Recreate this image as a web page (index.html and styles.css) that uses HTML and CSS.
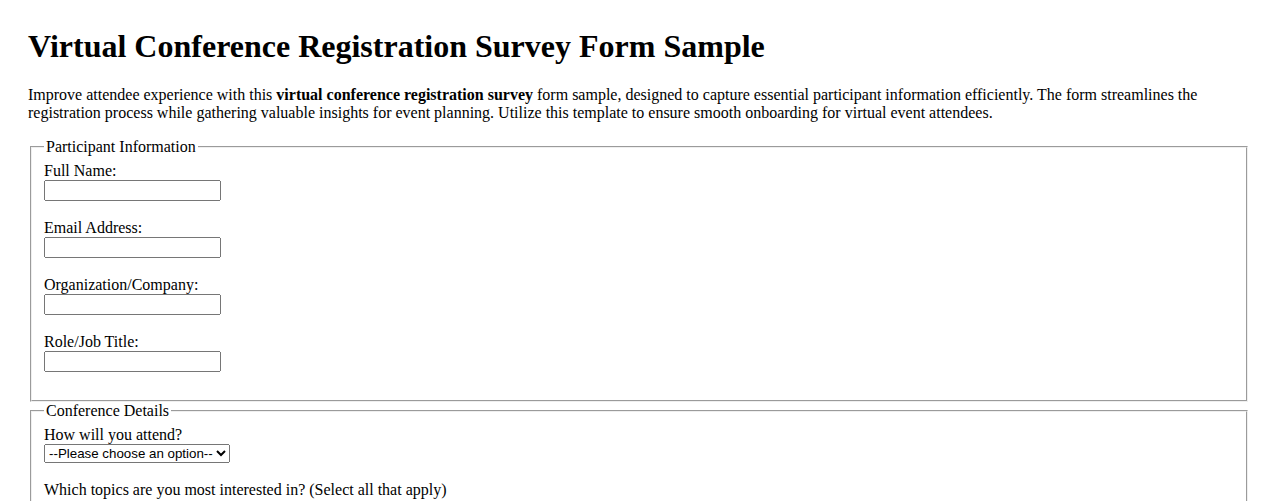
FILE: index.html
```html
<!DOCTYPE html>
<html lang="en">
<head>
<meta charset="utf-8">
<title>Virtual Conference Registration Survey Form Sample</title>
<link rel="stylesheet" href="styles.css">
</head>
<body>
<h1 class="title">Virtual Conference Registration Survey Form Sample</h1>
<p class="intro">Improve attendee experience with this <strong>virtual conference registration survey</strong> form sample, designed to capture essential participant information efficiently. The form streamlines the registration process while gathering valuable insights for event planning. Utilize this template to ensure smooth onboarding for virtual event attendees.</p>
<form class="survey">
  <fieldset class="group">
    <legend>Participant Information</legend>
    <label for="name">Full Name:</label><br>
    <input type="text" id="name" class="field"><br><br>
    <label for="email">Email Address:</label><br>
    <input type="email" id="email" class="field"><br><br>
    <label for="org">Organization/Company:</label><br>
    <input type="text" id="org" class="field"><br><br>
    <label for="role">Role/Job Title:</label><br>
    <input type="text" id="role" class="field"><br><br>
  </fieldset>
  <fieldset class="group">
    <legend>Conference Details</legend>
    <label for="attend">How will you attend?</label><br>
    <select id="attend" class="choice">
      <option>--Please choose an option--</option>
      <option>Live sessions</option>
      <option>Recorded sessions</option>
      <option>Both</option>
    </select><br><br>
    <label>Which topics are you most interested in? (Select all that apply)</label><br>
    <input type="checkbox" id="t1"> <label for="t1">Keynotes</label><br>
    <input type="checkbox" id="t2"> <label for="t2">Workshops</label><br>
  </fieldset>
</form>
</body>
</html>
```
FILE: styles.css
```css
html, body {
  background: #ffffff;
}
body {
  margin: 8px;
  padding: 20px;
  font-family: "Liberation Serif", "Times New Roman", serif;
  font-size: 16px;
  color: #000000;
}
.title {
  margin: 0 0 21.44px;
  font-size: 32px;
  font-weight: bold;
}
.intro {
  margin: 16px 0;
}
.group {
  margin: 0 2px;
}
.field {
  box-sizing: border-box;
  width: 177px;
  font-family: "Liberation Sans", Arial, sans-serif;
  font-size: 13.333px;
}
.choice {
  font-family: "Liberation Sans", Arial, sans-serif;
  font-size: 13.333px;
}
```
